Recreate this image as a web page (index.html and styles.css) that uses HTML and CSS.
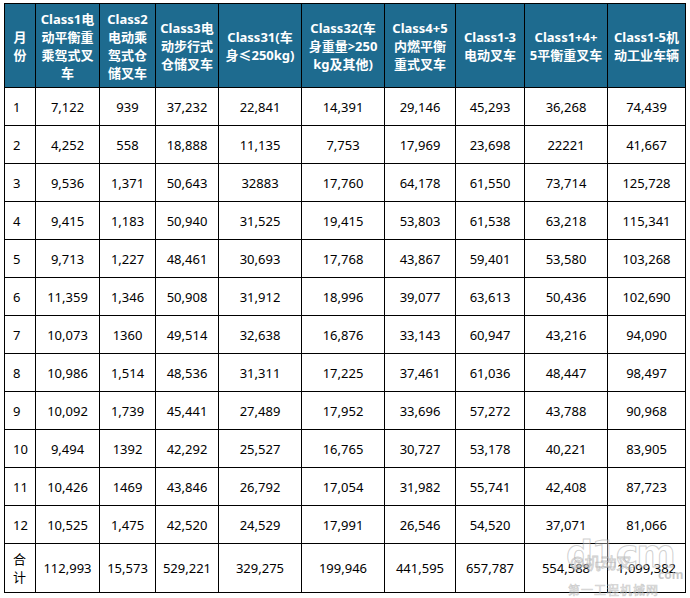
FILE: index.html
```html
<!DOCTYPE html>
<html>
<head>
<meta charset="utf-8">
<link rel="stylesheet" href="styles.css">
</head>
<body>
<div class="wrap">
<table class="data">
<colgroup>
<col class="c0"><col class="c1"><col class="c2"><col class="c3"><col class="c4"><col class="c5"><col class="c6"><col class="c7"><col class="c8"><col class="c9">
</colgroup>
<thead>
<tr>
<th>月<br>份</th>
<th>Class1电<br>动平衡重<br>乘驾式叉<br>车</th>
<th>Class2<br>电动乘<br>驾式仓<br>储叉车</th>
<th>Class3电<br>动步行式<br>仓储叉车</th>
<th>Class31(车<br>身≤250kg)</th>
<th>Class32(车<br>身重量&gt;250<br>kg及其他)</th>
<th>Class4+5<br>内燃平衡<br>重式叉车</th>
<th>Class1-3<br>电动叉车</th>
<th>Class1+4+<br>5平衡重叉车</th>
<th>Class1-5机<br>动工业车辆</th>
</tr>
</thead>
<tbody>
<tr><td class="m">1</td><td>7,122</td><td>939</td><td>37,232</td><td>22,841</td><td>14,391</td><td>29,146</td><td>45,293</td><td>36,268</td><td>74,439</td></tr>
<tr><td class="m">2</td><td>4,252</td><td>558</td><td>18,888</td><td>11,135</td><td>7,753</td><td>17,969</td><td>23,698</td><td>22221</td><td>41,667</td></tr>
<tr><td class="m">3</td><td>9,536</td><td>1,371</td><td>50,643</td><td>32883</td><td>17,760</td><td>64,178</td><td>61,550</td><td>73,714</td><td>125,728</td></tr>
<tr><td class="m">4</td><td>9,415</td><td>1,183</td><td>50,940</td><td>31,525</td><td>19,415</td><td>53,803</td><td>61,538</td><td>63,218</td><td>115,341</td></tr>
<tr><td class="m">5</td><td>9,713</td><td>1,227</td><td>48,461</td><td>30,693</td><td>17,768</td><td>43,867</td><td>59,401</td><td>53,580</td><td>103,268</td></tr>
<tr><td class="m">6</td><td>11,359</td><td>1,346</td><td>50,908</td><td>31,912</td><td>18,996</td><td>39,077</td><td>63,613</td><td>50,436</td><td>102,690</td></tr>
<tr><td class="m">7</td><td>10,073</td><td>1360</td><td>49,514</td><td>32,638</td><td>16,876</td><td>33,143</td><td>60,947</td><td>43,216</td><td>94,090</td></tr>
<tr><td class="m">8</td><td>10,986</td><td>1,514</td><td>48,536</td><td>31,311</td><td>17,225</td><td>37,461</td><td>61,036</td><td>48,447</td><td>98,497</td></tr>
<tr><td class="m">9</td><td>10,092</td><td>1,739</td><td>45,441</td><td>27,489</td><td>17,952</td><td>33,696</td><td>57,272</td><td>43,788</td><td>90,968</td></tr>
<tr><td class="m">10</td><td>9,494</td><td>1392</td><td>42,292</td><td>25,527</td><td>16,765</td><td>30,727</td><td>53,178</td><td>40,221</td><td>83,905</td></tr>
<tr><td class="m">11</td><td>10,426</td><td>1469</td><td>43,846</td><td>26,792</td><td>17,054</td><td>31,982</td><td>55,741</td><td>42,408</td><td>87,723</td></tr>
<tr><td class="m">12</td><td>10,525</td><td>1,475</td><td>42,520</td><td>24,529</td><td>17,991</td><td>26,546</td><td>54,520</td><td>37,071</td><td>81,066</td></tr>
<tr class="total"><td class="m">合<br>计</td><td>112,993</td><td>15,573</td><td>529,221</td><td>329,275</td><td>199,946</td><td>441,595</td><td>657,787</td><td>554,588</td><td>1,099,382</td></tr>
</tbody>
</table>
<div class="mark">
<span class="mark-logo">d1cm</span><span class="mark-com">com</span>
<span class="mark-at">@机动叉</span>
<span class="mark-cn">第一工程机械网</span>
</div>
</div>
</body>
</html>
```

FILE: styles.css
```css
html, body {
  margin: 0;
  padding: 0;
  background: #fff;
}
body {
  font-family: "Noto Sans", "Noto Sans CJK SC", sans-serif;
  font-size: 13px;
  color: #000;
}
.wrap {
  position: relative;
  padding: 3px 0 0 4px;
  width: 690px;
  height: 598px;
  box-sizing: border-box;
  overflow: hidden;
}
.data {
  border-collapse: collapse;
  table-layout: fixed;
  width: 681px;
}
.c0 { width: 31px; }
.c1 { width: 64px; }
.c2 { width: 56px; }
.c3 { width: 63px; }
.c4 { width: 83px; }
.c5 { width: 83px; }
.c6 { width: 71px; }
.c7 { width: 69px; }
.c8 { width: 83px; }
.c9 { width: 78px; }
.data th, .data td {
  border: 1px solid #000;
  padding: 0;
  text-align: center;
  vertical-align: middle;
  overflow: hidden;
  white-space: nowrap;
}
.data th {
  background: #1e6b8f;
  color: #fff;
  font-weight: 700;
  line-height: 18px;
  height: 83px;
}
.data td {
  height: 37px;
  line-height: 18px;
}
.data td.m {
  text-align: left;
  padding-left: 8px;
}
.data tr.total td {
  height: 48px;
}
.mark {
  position: absolute;
  left: 560px;
  top: 536px;
  width: 130px;
  height: 62px;
  pointer-events: none;
}
.mark-logo {
  position: absolute;
  left: 6px;
  top: -4px;
  font-family: "DejaVu Sans", sans-serif;
  font-weight: 700;
  font-size: 38px;
  letter-spacing: -2px;
  color: rgba(255,255,255,0.35);
  -webkit-text-stroke: 1px rgba(160,160,160,0.5);
}
.mark-com {
  position: absolute;
  left: 98px;
  top: 30px;
  font-size: 12px;
  font-weight: 700;
  color: rgba(175,175,175,0.7);
}
.mark-at {
  position: absolute;
  left: 10px;
  top: 14px;
  font-size: 16px;
  color: rgba(255,255,255,0.3);
  -webkit-text-stroke: 0.8px rgba(150,150,150,0.5);
}
.mark-cn {
  position: absolute;
  left: 8px;
  top: 45px;
  font-size: 12px;
  letter-spacing: 1px;
  color: rgba(255,255,255,0.3);
  -webkit-text-stroke: 0.7px rgba(165,165,165,0.55);
}
```
